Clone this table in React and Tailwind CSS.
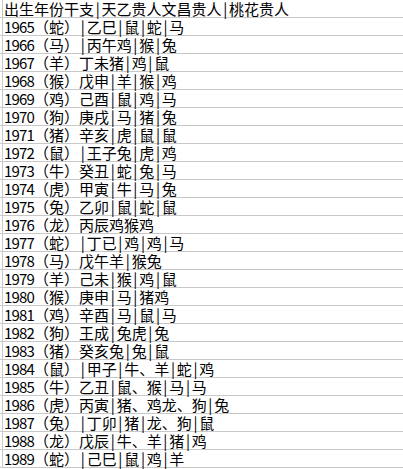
const rows = [
  '出生年份干支|天乙贵人文昌贵人|桃花贵人',
  '1965（蛇）|乙巳|鼠|蛇|马',
  '1966（马）|丙午鸡|猴|兔',
  '1967（羊）丁未猪|鸡|鼠',
  '1968（猴）戊申|羊|猴|鸡',
  '1969（鸡）己酉|鼠|鸡|马',
  '1970（狗）庚戌|马|猪|兔',
  '1971（猪）辛亥|虎|鼠|鼠',
  '1972（鼠）|王子兔|虎|鸡',
  '1973（牛）癸丑|蛇|兔|马',
  '1974（虎）甲寅|牛|马|兔',
  '1975（兔）乙卯|鼠|蛇|鼠',
  '1976（龙）丙辰鸡猴鸡',
  '1977（蛇）|丁已|鸡|鸡|马',
  '1978（马）戊午羊|猴兔',
  '1979（羊）己未|猴|鸡|鼠',
  '1980（猴）庚申|马|猪鸡',
  '1981（鸡）辛酉|马|鼠|马',
  '1982（狗）王成|兔虎|兔',
  '1983（猪）癸亥兔|兔|鼠',
  '1984（鼠）|甲子|牛、羊|蛇|鸡',
  '1985（牛）乙丑|鼠、猴|马|马',
  '1986（虎）丙寅|猪、鸡龙、狗|兔',
  '1987（兔）|丁卯|猪|龙、狗|鼠',
  '1988（龙）戊辰|牛、羊|猪|鸡',
  '1989（蛇）|己巳|鼠|鸡|羊',
];

// split a line into digit runs, pipes and cjk runs
function tokens(text) {
  return text.match(/[0-9]+|\||[^0-9|]+/g) || [];
}

function Cell({ text }) {
  return (
    <div className="flex items-center whitespace-nowrap">
      {tokens(text).map((t, i) => {
        if (t === '|') return <span key={i} className="inline-block w-[7.5px] text-center">|</span>;
        if (/^[0-9]+$/.test(t)) return <span key={i} className="tracking-[-0.8px]">{t}</span>;
        return <span key={i}>{t}</span>;
      })}
    </div>
  );
}

export default function App() {
  return (
    <div className="w-[403px] h-[469px] bg-white overflow-hidden text-black text-[15px] leading-[18px] font-['Noto_Sans_CJK_SC','Noto_Sans',sans-serif]">
      {rows.map((r, i) => (
        <div key={i} className="flex h-[18px] border-b border-[#c8c8c8]">
          <div className="w-[3px] shrink-0 border-r border-[#c8c8c8]" />
          <div className="pl-[1px]">
            <Cell text={r} />
          </div>
        </div>
      ))}
    </div>
  );
}
